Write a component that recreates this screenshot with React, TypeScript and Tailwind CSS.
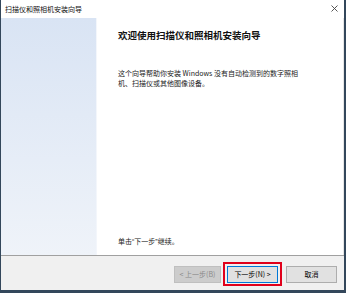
import React from "react";

const font = { fontFamily: '"Noto Sans CJK SC", "Noto Sans", sans-serif' };

export default function App() {
  return (
    <div
      className="w-[346px] h-[293px] flex flex-col bg-white border-l border-r-2 border-b-[3px] border-[#33475b] text-black overflow-hidden"
      style={font}
    >
      <div className="h-[18px] shrink-0 flex items-center justify-between pl-[4px] pr-[6px] bg-white">
        <span className="text-[7px] leading-none text-[#111]">扫描仪和照相机安装向导</span>
        <svg width="7" height="7" viewBox="0 0 7 7" className="mt-[-1px]">
          <path d="M0.5 0.5 L6.5 6.5 M6.5 0.5 L0.5 6.5" stroke="#444" strokeWidth="0.9" />
        </svg>
      </div>
      <div className="flex flex-row h-[237px] shrink-0">
        <div className="w-[96px] shrink-0 bg-gradient-to-b from-[#d9e4f4] to-[#eff3f9] border-r border-[#f3f6fb]" />
        <div className="flex-1 flex flex-col pl-[21px] pt-[11px] pb-[8px] border-r border-[#e6e6e6]">
          <div className="text-[9.5px] leading-[12px] font-bold text-[#111] whitespace-nowrap">
            欢迎使用扫描仪和照相机安装向导
          </div>
          <div className="mt-[27px] text-[7px] leading-[10px] text-[#222] whitespace-nowrap">
            这个向导帮助你安装 Windows 没有自动检测到的数字照相
            <br />
            机、扫描仪或其他图像设备。
          </div>
          <div className="mt-auto text-[7px] leading-[10px] text-[#222] whitespace-nowrap font-['Liberation_Sans','Noto_Sans_CJK_SC',sans-serif]">
            单击“下一步”继续。
          </div>
        </div>
      </div>
      <div className="h-px shrink-0 bg-[#a0a0a0]" />
      <div className="flex-1 bg-[#f0f0f0] flex flex-row items-center justify-end pr-[7px] pt-[2px]">
        <div className="w-[47px] h-[17px] bg-[#cccccc] border border-[#bfbfbf] flex items-center justify-center text-[7px] leading-none text-[#8a8a8a] whitespace-nowrap">
          &lt; 上一步(B)
        </div>
        <div className="ml-[2px] w-[59px] h-[24px] border-2 border-[#e0001b] flex items-center justify-center">
          <div className="w-[51px] h-[17px] bg-[#e1e1e1] border border-[#0078d7] flex items-center justify-center text-[7px] leading-none text-black whitespace-nowrap">
            下一步(N) &gt;
          </div>
        </div>
        <div className="ml-[4px] w-[51px] h-[17px] bg-[#e1e1e1] border border-[#adadad] flex items-center justify-center text-[7px] leading-none text-black">
          取消
        </div>
      </div>
    </div>
  );
}
